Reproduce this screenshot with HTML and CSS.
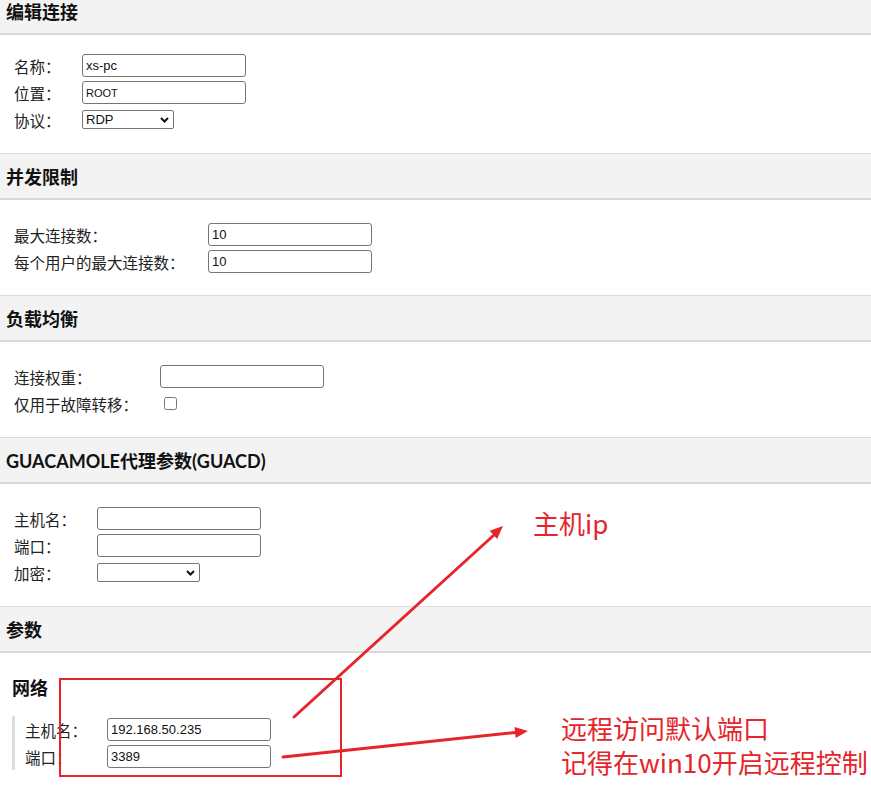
FILE: index.html
```html
<!DOCTYPE html>
<html lang="zh-CN">
<head>
  <meta charset="UTF-8">
  <title>编辑连接</title>
  <link rel="stylesheet" href="styles.css">
</head>
<body>

  <div class="page">

    <!-- Basic -->
    <section class="section">
      <h2 class="section-header">编辑连接</h2>
      <div class="section-body first">
        <div class="fields fields-basic">
          <label class="field-label">名称：</label>
          <input class="text-input" type="text" value="xs-pc">
          <label class="field-label">位置：</label>
          <input class="text-input small-text" type="text" value="ROOT">
          <label class="field-label">协议：</label>
          <span class="select-wrap">
            <select class="select-input select-protocol">
              <option>RDP</option>
            </select>
            <svg class="chevron" width="9" height="6" viewBox="0 0 9 6"><path d="M1 1 L4.5 4.5 L8 1" fill="none" stroke="#111" stroke-width="2"/></svg>
          </span>
        </div>
      </div>
    </section>

    <!-- Concurrency -->
    <section class="section">
      <h2 class="section-header">并发限制</h2>
      <div class="section-body">
        <div class="fields fields-limits">
          <label class="field-label">最大连接数：</label>
          <input class="text-input" type="text" value="10">
          <label class="field-label">每个用户的最大连接数：</label>
          <input class="text-input" type="text" value="10">
        </div>
      </div>
    </section>

    <!-- Load balancing -->
    <section class="section">
      <h2 class="section-header">负载均衡</h2>
      <div class="section-body">
        <div class="fields fields-balance">
          <label class="field-label">连接权重：</label>
          <input class="text-input" type="text" value="">
          <label class="field-label">仅用于故障转移：</label>
          <input class="check-input" type="checkbox">
        </div>
      </div>
    </section>

    <!-- guacd -->
    <section class="section">
      <h2 class="section-header">GUACAMOLE代理参数(GUACD)</h2>
      <div class="section-body">
        <div class="fields fields-guacd">
          <label class="field-label">主机名：</label>
          <input class="text-input" type="text" value="">
          <label class="field-label">端口：</label>
          <input class="text-input" type="text" value="">
          <label class="field-label">加密：</label>
          <span class="select-wrap">
            <select class="select-input select-encryption">
              <option></option>
            </select>
            <svg class="chevron" width="9" height="6" viewBox="0 0 9 6"><path d="M1 1 L4.5 4.5 L8 1" fill="none" stroke="#111" stroke-width="2"/></svg>
          </span>
        </div>
      </div>
    </section>

    <!-- Parameters -->
    <section class="section">
      <h2 class="section-header">参数</h2>
      <div class="section-body params">
        <h3 class="group-title">网络</h3>
        <div class="group">
          <div class="fields fields-network">
            <label class="field-label">主机名：</label>
            <input class="text-input" type="text" value="192.168.50.235">
            <label class="field-label">端口：</label>
            <input class="text-input" type="text" value="3389">
          </div>
        </div>
      </div>
    </section>

  </div>

  <!-- Screenshot annotations drawn over the form -->
  <div class="annotations">
    <svg class="marks" width="871" height="792" viewBox="0 0 871 792">
      <rect x="60" y="679" width="281" height="97" fill="none" stroke="#e5252b" stroke-width="2"/>
      <line x1="294" y1="717" x2="494" y2="535" stroke="#e5252b" stroke-width="3" stroke-linecap="round"/>
      <polygon points="503,526 497.1,538.9 489.7,530.7" fill="#e5252b"/>
      <line x1="283" y1="757" x2="516" y2="732.4" stroke="#e5252b" stroke-width="3" stroke-linecap="round"/>
      <polygon points="528,731 515.7,737.9 514.5,726.9" fill="#e5252b"/>
    </svg>
    <div class="note note-ip">主机ip</div>
    <div class="note note-port">远程访问默认端口<br>记得在win10开启远程控制</div>
  </div>

</body>
</html>
```

FILE: styles.css
```css
/* Reset */
* {
  margin: 0;
  padding: 0;
  box-sizing: border-box;
}

html {
  overflow: hidden;
}

body {
  font-family: "Noto Sans CJK SC", "Noto Sans", sans-serif;
  font-size: 15px;
  color: #333;
  background: #fff;
}

/* page is scrolled a little, first header is cut off */
.page {
  margin-top: -12px;
}

/* Section headers */
.section-header {
  height: 47px;
  display: flex;
  align-items: center;
  padding-left: 6px;
  background: #f3f3f3;
  border-top: 1px solid #dcdcdc;
  border-bottom: 2px solid #d9d9d9;
  font-family: Lato, "Noto Sans CJK SC", sans-serif;
  font-size: 18px;
  font-weight: bold;
  color: #111;
}

.section-body {
  padding: 21px 14px 20px;
}

.section-body.first {
  padding-top: 17px;
}

/* Label / control grid */
.fields {
  display: grid;
  grid-auto-rows: 27px;
  align-items: center;
  justify-items: start;
}

.fields-basic   { grid-template-columns: 68px auto; }
.fields-limits  { grid-template-columns: 194px auto; }
.fields-balance { grid-template-columns: 146px auto; }
.fields-guacd   { grid-template-columns: 83px auto; }
.fields-network { grid-template-columns: 82px auto; }

.field-label {
  font-size: 15.5px;
  line-height: 20px;
  color: #222;
}

.text-input {
  width: 164px;
  height: 23px;
  padding: 0 3px;
  border: 1px solid #767676;
  border-radius: 3px;
  background: #fff;
  font-family: "Liberation Sans", Arial, sans-serif;
  font-size: 13px;
  color: #111;
}

.text-input.small-text {
  font-size: 11px;
}

/* Select with drawn chevron */
.select-wrap {
  position: relative;
  display: inline-block;
  height: 19px;
}

.select-input {
  -webkit-appearance: none;
  appearance: none;
  display: block;
  height: 19px;
  border: 1px solid #767676;
  border-radius: 2px;
  background: #fff;
  padding-left: 3px;
  font-family: "Liberation Sans", Arial, sans-serif;
  font-size: 13px;
  color: #111;
}

.chevron {
  position: absolute;
  right: 5px;
  top: 7px;
  pointer-events: none;
}

.select-protocol   { width: 92px; }
.select-encryption { width: 103px; }

.check-input {
  width: 13px;
  height: 13px;
  margin-left: 4px;
}

/* Parameters group */
.section-body.params {
  padding: 23px 12px 10px;
}

.group-title {
  font-family: Lato, "Noto Sans CJK SC", sans-serif;
  font-size: 18px;
  font-weight: bold;
  line-height: 24px;
  color: #111;
}

.group {
  margin-top: 16px;
  border-left: 3px solid #dddddd;
  padding-left: 10px;
}

/* Annotations over the screenshot */
.annotations {
  position: absolute;
  top: 0;
  left: 0;
  width: 871px;
  height: 792px;
  pointer-events: none;
}

.marks {
  display: block;
}

.note {
  position: absolute;
  font-family: "Noto Sans CJK SC", sans-serif;
  font-size: 26px;
  line-height: 34px;
  color: #e5252b;
  white-space: nowrap;
}

.note-ip {
  left: 533px;
  top: 506px;
}

.note-port {
  left: 561px;
  top: 711px;
}
```
